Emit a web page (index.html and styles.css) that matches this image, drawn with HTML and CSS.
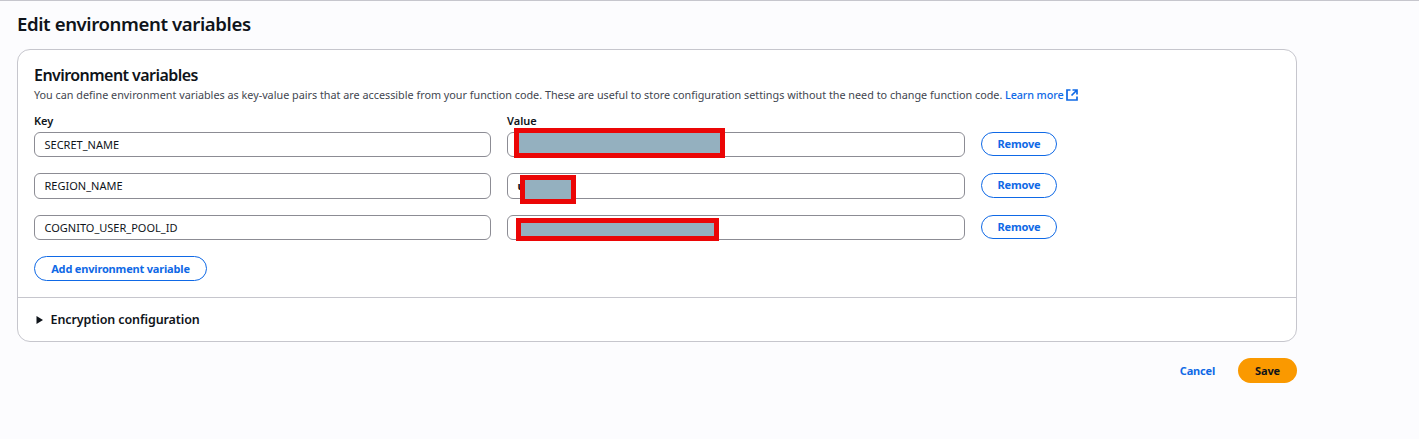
FILE: index.html
```html
<!DOCTYPE html>
<html lang="en">
<head>
<meta charset="utf-8">
<title>Edit environment variables</title>
<link rel="stylesheet" href="styles.css">
</head>
<body>
<main class="page">
  <h1 class="page-title">Edit environment variables</h1>
  <section class="card">
    <div class="card-body">
      <h2 class="card-title">Environment variables</h2>
      <p class="description">You can define environment variables as key-value pairs that are accessible from your function code. These are useful to store configuration settings without the need to change function code. <a class="learn-more">Learn more</a><svg class="external" viewBox="0 0 12 12"><path d="M4.5 1H1v10h10V7.5M6.5 1H11v4.500M10.500 1.500 5.500 6.500"/></svg></p>
      <div class="grid labels"><span class="label">Key</span><span class="label">Value</span></div>
      <div class="grid row">
        <div class="input">SECRET_NAME</div>
        <div class="input"><span class="redaction first"></span></div>
        <button class="button remove">Remove</button>
      </div>
      <div class="grid row tall">
        <div class="input">REGION_NAME</div>
        <div class="input"><b>u</b><span class="redaction second"></span></div>
        <button class="button remove">Remove</button>
      </div>
      <div class="grid row">
        <div class="input">COGNITO_USER_POOL_ID</div>
        <div class="input"><span class="redaction third"></span></div>
        <button class="button remove">Remove</button>
      </div>
      <button class="button add">Add environment variable</button>
    </div>
    <div class="card-footer"><svg class="caret" viewBox="0 0 7 8"><path d="M.5 0v8L7 4z"/></svg><span class="expand-title">Encryption configuration</span></div>
  </section>
  <div class="actions">
    <button class="cancel">Cancel</button>
    <button class="save">Save</button>
  </div>
</main>
</body>
</html>
```

FILE: styles.css
```css
* { box-sizing: border-box; }
body {
  margin: 0;
  height: 439px;
  overflow: hidden;
  background: #fcfcfe;
  border-top: 1px solid #c6c6cd;
  color: #0f141a;
  font-family: "Noto Sans", sans-serif;
  font-size: 11px;
}
button { font-family: inherit; margin: 0; padding: 0; white-space: nowrap; }
h1, h2, p { margin: 0; white-space: nowrap; }
.page { width: 1297px; padding: 10px 0 0 17px; }
.page-title { height: 38px; font-size: 18.6px; line-height: 26px; font-weight: 600; letter-spacing: -0.4px; }
.card { height: 293px; border: 1px solid #c6c6cd; border-radius: 13px; background: #fff; }
.card-body { height: 247px; padding: 15px 16px 0; }
.card-title { font-size: 16px; line-height: 20px; font-weight: 600; letter-spacing: -0.55px; }
.description { display: flex; align-items: center; height: 20px; white-space: pre; line-height: 20px; font-size: 10.8px; color: #424650; }
.learn-more { color: #0f69e6; font-weight: 500; letter-spacing: -0.13px; }
.external { width: 12px; height: 12px; margin-left: 2.500px; fill: none; stroke: #0f69e6; stroke-width: 1.7; }
.grid { display: grid; grid-template-columns: 457px 458px 76px; column-gap: 16px; }
.labels { margin-top: 9px; height: 18px; line-height: 14px; }
.label { font-weight: 600; font-size: 11px; }
.row { height: 25px; margin-bottom: 16px; }
.row.tall { height: 26px; }
.input { position: relative; display: flex; align-items: center; padding: 0 9.5px 1px; border: 1px solid #8c8c94; border-radius: 6px; background: #fff; font-size: 11px; }
.button { border: 1px solid #0f69e6; border-radius: 13px; background: #fff; color: #0f69e6; font-size: 11px; font-weight: 700; letter-spacing: -0.18px; }
.remove { height: 24px; width: 76px; padding-bottom: 2px; }
.tall .remove { height: 25px; }
.add { display: block; width: 173px; height: 25px; }
/* Masks cover the private values and overlap the field borders. */
.redaction { position: absolute; border: 5px solid #eb0606; background: #94b0bf; }
.first { left: 6px; top: -5px; width: 211px; height: 30px; }
.second { left: 12px; top: 1px; width: 56px; height: 29px; }
.third { left: 8px; top: 2px; width: 203px; height: 23px; }
.card-footer { display: flex; align-items: center; height: 44px; padding: 0 18px; border-top: 1px solid #c6c6cd; }
.caret { width: 7px; height: 8px; margin-right: 7.5px; fill: #0f141a; }
.expand-title { font-size: 12.5px; font-weight: 600; letter-spacing: -0.1px; }
.actions { display: flex; justify-content: flex-end; gap: 23px; margin-top: 16px; height: 25px; }
.cancel { border: 0; background: none; color: #0f69e6; font-size: 11px; font-weight: 700; letter-spacing: -0.18px; }
.save { width: 59px; border: 0; border-radius: 13px; background: #fa9900; color: #0f141a; font-size: 11px; font-weight: 700; letter-spacing: -0.18px; }
```
